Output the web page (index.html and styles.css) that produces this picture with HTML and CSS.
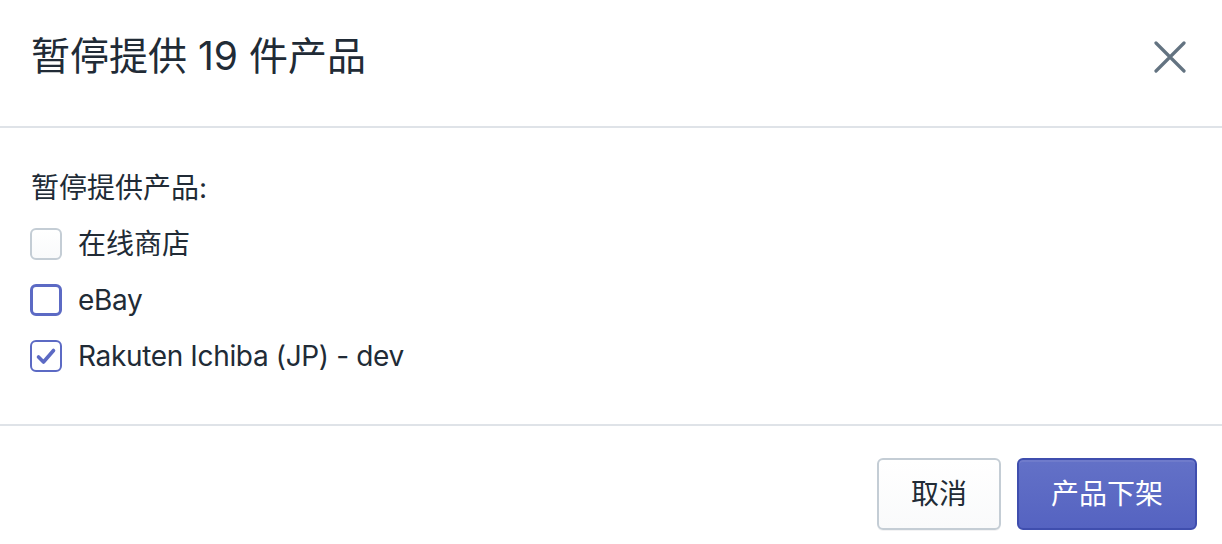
FILE: index.html
```html
<!DOCTYPE html>
<html lang="zh-CN">
<head>
<meta charset="utf-8">
<title>暂停提供 19 件产品</title>
<link rel="stylesheet" href="styles.css">
</head>
<body>
<div class="modal">
  <div class="modal-header">
    <h2 class="modal-title">暂停提供 19 件产品</h2>
    <button class="close-btn" aria-label="关闭">
      <svg width="32" height="32" viewBox="0 0 32 32"><path d="M2 2 L30 30 M30 2 L2 30" stroke="#637381" stroke-width="3.2" stroke-linecap="round" fill="none"/></svg>
    </button>
  </div>
  <div class="modal-body">
    <p class="list-title">暂停提供产品:</p>
    <ul class="choices">
      <li class="choice">
        <span class="checkbox"></span>
        <span class="choice-label">在线商店</span>
      </li>
      <li class="choice">
        <span class="checkbox focused"></span>
        <span class="choice-label latin">eBay</span>
      </li>
      <li class="choice">
        <span class="checkbox checked">
          <svg width="22" height="22" viewBox="0 0 22 22"><path d="M3.5 12 L8.5 17 L18.5 5.5" stroke="#5c6ac4" stroke-width="3.6" stroke-linecap="round" stroke-linejoin="round" fill="none"/></svg>
        </span>
        <span class="choice-label latin">Rakuten Ichiba (JP) - dev</span>
      </li>
    </ul>
  </div>
  <div class="modal-footer">
    <button class="btn btn-secondary">取消</button>
    <button class="btn btn-primary">产品下架</button>
  </div>
</div>
</body>
</html>
```
FILE: styles.css
```css
* { box-sizing: border-box; }
html, body {
  margin: 0;
  padding: 0;
  background: #ffffff;
}
body {
  font-family: "Inter", "Noto Sans CJK SC", sans-serif;
  color: #212b36;
  width: 1222px;
  height: 544px;
  overflow: hidden;
}
.modal {
  display: flex;
  flex-direction: column;
}
.modal-header {
  display: flex;
  align-items: flex-start;
  justify-content: space-between;
  height: 128px;
  padding: 32px 36px 0 31px;
  border-bottom: 2px solid #dfe3e8;
}
.modal-title {
  margin: 0;
  font-size: 39px;
  line-height: 48px;
  font-weight: 400;
  color: #212b36;
}
.close-btn {
  background: none;
  border: 0;
  padding: 0;
  margin-top: 9px;
  width: 32px;
  height: 32px;
  display: flex;
}
.modal-body {
  padding: 40px 31px 0 30px;
  height: 298px;
  border-bottom: 2px solid #dfe3e8;
}
.list-title {
  margin: 0 0 16px 1px;
  font-size: 28px;
  line-height: 40px;
}
.choices {
  list-style: none;
  margin: 0;
  padding: 0;
  display: flex;
  flex-direction: column;
  gap: 16px;
}
.choice {
  display: flex;
  align-items: center;
  height: 40px;
  gap: 16px;
}
.checkbox {
  width: 32px;
  height: 32px;
  border-radius: 6px;
  border: 2px solid #c4cdd5;
  background: linear-gradient(#ffffff, #f9fafb);
  display: flex;
  align-items: center;
  justify-content: center;
  flex: none;
}
.checkbox.focused {
  border: 3px solid #5c6ac4;
  background: #ffffff;
}
.checkbox.checked {
  border: 2px solid #5c6ac4;
  background: #ffffff;
}
.choice-label {
  font-size: 28px;
  line-height: 40px;
}
.choice-label.latin {
  letter-spacing: -0.35px;
}
.modal-footer {
  display: flex;
  justify-content: flex-end;
  gap: 16px;
  padding: 32px 25px 0 0;
}
.btn {
  height: 72px;
  border-radius: 6px;
  font-family: "Inter", "Noto Sans CJK SC", sans-serif;
  font-size: 28px;
  line-height: 40px;
  padding: 0 32px;
}
.btn-secondary {
  width: 124px;
  color: #212b36;
  background: linear-gradient(#ffffff, #f9fafb);
  border: 2px solid #c4cdd5;
  box-shadow: 0 1px 0 0 rgba(22, 29, 37, 0.05);
}
.btn-primary {
  width: 180px;
  color: #ffffff;
  background: linear-gradient(#6371c7, #5563c1);
  border: 2px solid #3f4eae;
  box-shadow: inset 0 2px 0 0 #6f7bcb;
}
```
